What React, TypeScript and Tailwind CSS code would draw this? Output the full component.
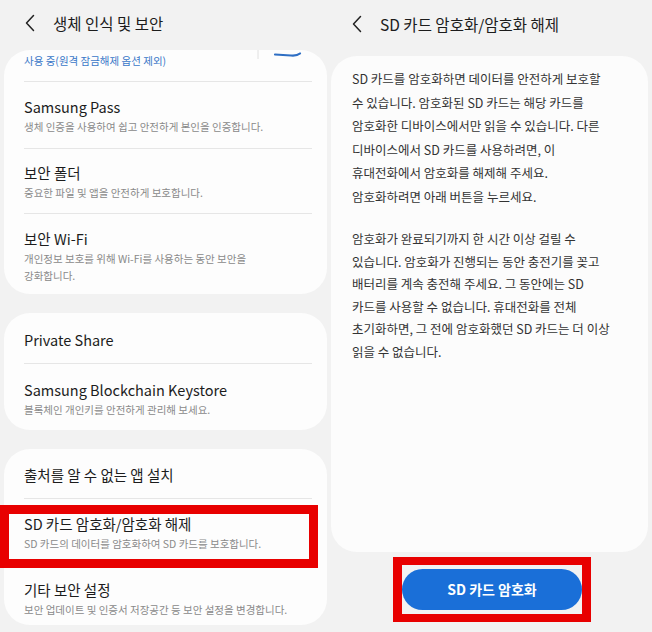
export default function App() {
  const font = "font-['Noto_Sans_CJK_KR','Noto_Sans',sans-serif]";

  const Divider = () => <div className="ml-[20px] mr-[15px] h-px bg-[#e6e6e6]" />;

  const Row = ({ title, sub, pt = 'pt-[15px]', pb = 'pb-[12px]' }: { title: string; sub?: string[]; pt?: string; pb?: string }) => (
    <div className={`pl-[20px] pr-[15px] ${pt} ${pb}`}>
      <p className="text-[14.5px] leading-[20px] text-[#1c1c1c]">{title}</p>
      {sub && (
        <div className="mt-[1px]">
          {sub.map((s, i) => (
            <p key={i} className="text-[10.5px] leading-[17px] text-[#8a8a8a]">{s}</p>
          ))}
        </div>
      )}
    </div>
  );

  const Chevron = () => (
    <svg width="10" height="18" viewBox="0 0 10 18" fill="none">
      <path d="M8.5 1.5 L1.5 9 L8.5 16.5" stroke="#222" strokeWidth="1.5" strokeLinecap="round" strokeLinejoin="round" />
    </svg>
  );

  const para1 = [
    'SD 카드를 암호화하면 데이터를 안전하게 보호할',
    '수 있습니다. 암호화된 SD 카드는 해당 카드를',
    '암호화한 디바이스에서만 읽을 수 있습니다. 다른',
    '디바이스에서 SD 카드를 사용하려면, 이',
    '휴대전화에서 암호화를 해제해 주세요.',
    '암호화하려면 아래 버튼을 누르세요.',
  ];
  const para2 = [
    '암호화가 완료되기까지 한 시간 이상 걸릴 수',
    '있습니다. 암호화가 진행되는 동안 충전기를 꽂고',
    '배터리를 계속 충전해 주세요. 그 동안에는 SD',
    '카드를 사용할 수 없습니다. 휴대전화를 전체',
    '초기화하면, 그 전에 암호화했던 SD 카드는 더 이상',
    '읽을 수 없습니다.',
  ];

  return (
    <div className={`flex h-[632px] w-[652px] overflow-hidden bg-[#f2f2f2] ${font}`}>
      {/* left screen */}
      <div className="relative w-[330px] shrink-0">
        <div className="flex h-[50px] items-start gap-[18px] pl-[25px] pt-[14px]">
          <Chevron />
          <h1 className="-mt-[2px] text-[15.5px] leading-[22px] text-[#1c1c1c]">생체 인식 및 보안</h1>
        </div>

        <div className="ml-[4px] mr-[3px] flex flex-col gap-[19px]">
          <div className="relative overflow-hidden rounded-[26px] bg-[#fdfdfd]">
            {/* switch, mostly scrolled out of view */}
            <svg className="absolute left-[250px] top-0" width="56" height="12" viewBox="0 0 56 12" fill="none">
              <path d="M4 0 L4 9" stroke="#e0e0e0" strokeWidth="1" />
              <path d="M21 4.5 L37 5.5 Q43 6 46 3.5" stroke="#2f6fc4" strokeWidth="2.2" strokeLinecap="round" />
            </svg>
            <div className="h-[31px] pl-[20px] pt-[3px]">
              <p className="text-[10.5px] leading-[16px] text-[#3a78c8]">사용 중(원격 잠금해제 옵션 제외)</p>
            </div>
            <Divider />
            <Row title="Samsung Pass" sub={['생체 인증을 사용하여 쉽고 안전하게 본인을 인증합니다.']} pb="pb-[13px]" />
            <Divider />
            <Row title="보안 폴더" sub={['중요한 파일 및 앱을 안전하게 보호합니다.']} pt="pt-[14px]" />
            <Divider />
            <Row title="보안 Wi-Fi" sub={['개인정보 보호를 위해 Wi-Fi를 사용하는 동안 보안을', '강화합니다.']} pb="pb-[10px]" />
          </div>

          <div className="overflow-hidden rounded-[26px] bg-[#fdfdfd]">
            <Row title="Private Share" pt="pt-[17px]" pb="pb-[13px]" />
            <Divider />
            <Row title="Samsung Blockchain Keystore" sub={['블록체인 개인키를 안전하게 관리해 보세요.']} pt="pt-[16px]" />
          </div>

          <div className="overflow-hidden rounded-[26px] bg-[#fdfdfd]">
            <Row title="출처를 알 수 없는 앱 설치" pt="pt-[16px]" pb="pb-[13px]" />
            <Divider />
            <Row title="SD 카드 암호화/암호화 해제" sub={['SD 카드의 데이터를 암호화하여 SD 카드를 보호합니다.']} pb="pb-[14px]" />
            <Divider />
            <Row title="기타 보안 설정" sub={['보안 업데이트 및 인증서 저장공간 등 보안 설정을 변경합니다.']} pt="pt-[13px]" pb="pb-[7px]" />
          </div>
        </div>

        {/* highlight */}
        <div className="absolute left-0 top-[505px] h-[63px] w-[318px] border-[9px] border-[#e80000]" />
      </div>

      {/* right screen */}
      <div className="flex flex-1 flex-col">
        <div className="flex h-[56px] items-start gap-[18px] pl-[22px] pt-[15px]">
          <Chevron />
          <h1 className="-mt-[2px] text-[15.5px] leading-[22px] text-[#1c1c1c]">SD 카드 암호화/암호화 해제</h1>
        </div>

        <div className="ml-[1px] mr-[4px] h-[496px] rounded-[26px] bg-[#fcfcfc] pl-[21px] pt-[11px]">
          <div className="text-[12.5px] leading-[23.5px] text-[#333]">
            {para1.map((l, i) => (
              <p key={i}>{l}</p>
            ))}
          </div>
          <div className="mt-[20px] text-[12.5px] leading-[22.5px] text-[#333]">
            {para2.map((l, i) => (
              <p key={i}>{l}</p>
            ))}
          </div>
        </div>

        <div className="mt-[5px] flex justify-center pl-[2px]">
          <div className="border-x-[9px] border-y-[8px] border-[#e80000] bg-[#f2f2f2] py-[4px]">
            <button className="flex h-[41px] w-[180px] items-center justify-center rounded-full bg-[#1a6fd8] text-[14px] font-semibold text-white">
              SD 카드 암호화
            </button>
          </div>
        </div>
      </div>
    </div>
  );
}
